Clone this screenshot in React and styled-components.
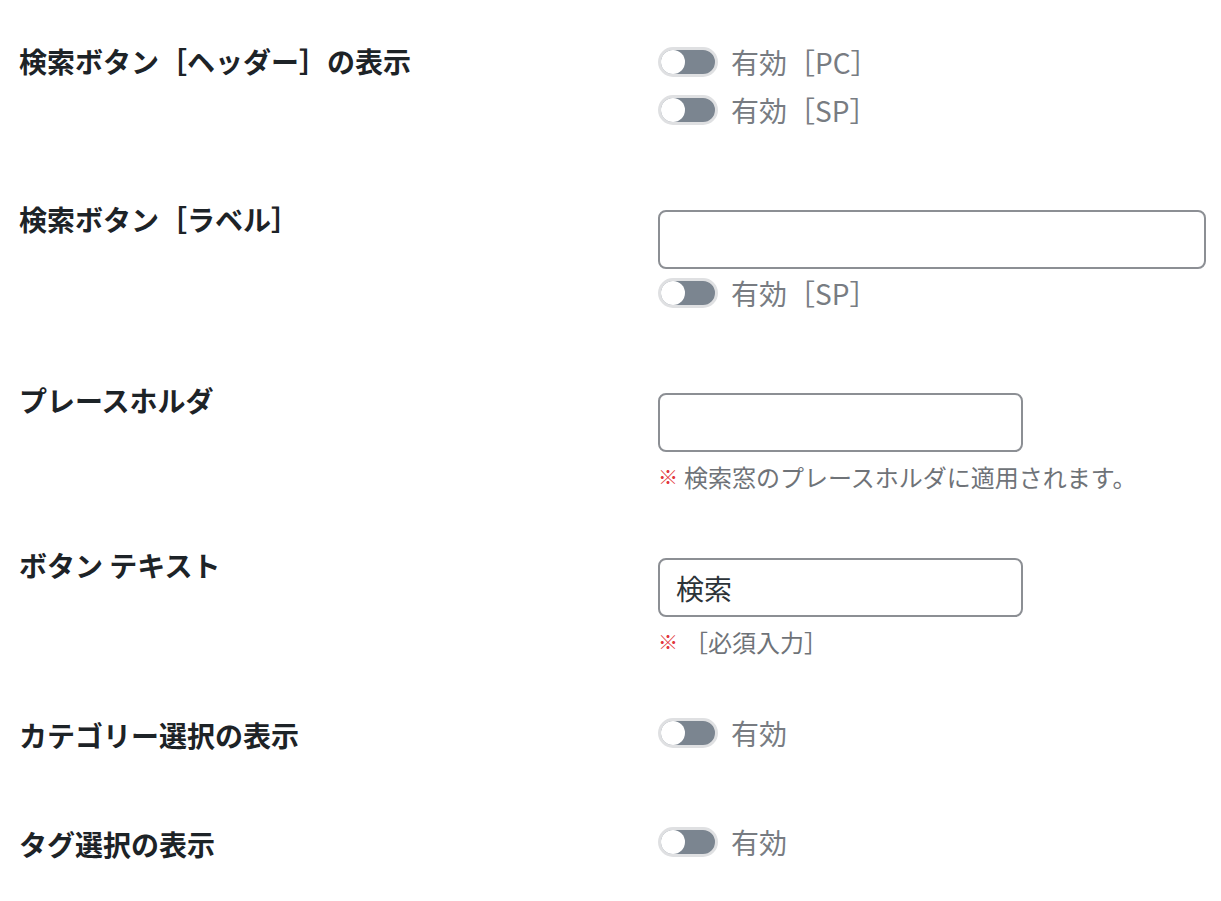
import React from 'react';
import styled, { createGlobalStyle } from 'styled-components';

const GlobalStyle = createGlobalStyle`
  html, body {
    margin: 0;
    padding: 0;
    background: #ffffff;
  }
  body {
    font-family: "Noto Sans CJK JP", "Noto Sans", sans-serif;
    color: #1d2327;
  }
`;

const Form = styled.div`
  display: flex;
  flex-direction: column;
  width: 1221px;
`;

const Row = styled.div`
  display: grid;
  grid-template-columns: 658px 1fr;
  align-items: start;
  margin-top: ${p => p.$mt}px;
`;

const Label = styled.div`
  padding-left: 19px;
  padding-top: ${p => p.$pt || 0}px;
  font-size: 28px;
  font-weight: 700;
  line-height: 46px;
  color: #1d2327;
  white-space: nowrap;
`;

const Field = styled.div`
  display: flex;
  flex-direction: column;
  align-items: flex-start;
  padding-top: ${p => p.$pt || 0}px;
`;

const ToggleLine = styled.label`
  display: flex;
  align-items: center;
  gap: 13px;
  height: 48px;
  font-size: 28px;
  color: #787c82;
  cursor: pointer;
`;

const Track = styled.span`
  position: relative;
  display: inline-block;
  box-sizing: border-box;
  width: 60px;
  height: 30px;
  border-radius: 15px;
  border: 3px solid #dfe0e2;
  background: #7b8590;
  flex-shrink: 0;
`;

const Knob = styled.span`
  position: absolute;
  left: 0;
  top: 0;
  width: 24px;
  height: 24px;
  border-radius: 50%;
  background: #ffffff;
`;

const TextInput = styled.input`
  box-sizing: border-box;
  width: ${p => p.$w}px;
  height: 59px;
  margin: 0;
  padding: 0 16px;
  border: 2px solid #8c8f94;
  border-radius: 8px;
  background: #fff;
  font-family: "Noto Sans CJK JP", "Noto Sans", sans-serif;
  font-size: 28px;
  color: #2c3338;
  outline: none;
`;

const Note = styled.p`
  display: flex;
  align-items: center;
  margin: 6px 0 0;
  height: 36px;
  font-size: 24px;
  color: #6f7378;
  white-space: nowrap;
`;

const Mark = styled.span`
  font-size: 20px;
  color: #e2363b;
  margin-right: 6px;
  font-weight: 700;
`;

const Toggle = ({ children }) => (
  <ToggleLine>
    <Track>
      <Knob />
    </Track>
    <span>{children}</span>
  </ToggleLine>
);

export default function App() {
  return (
    <>
      <GlobalStyle />
      <Form>
        <Row $mt={38}>
          <Label>検索ボタン［ヘッダー］の表示</Label>
          <Field>
            <Toggle>有効［PC］</Toggle>
            <Toggle>有効［SP］</Toggle>
          </Field>
        </Row>

        <Row $mt={62}>
          <Label>検索ボタン［ラベル］</Label>
          <Field $pt={14}>
            <TextInput $w={548} defaultValue="" />
            <Toggle>有効［SP］</Toggle>
          </Field>
        </Row>

        <Row $mt={59}>
          <Label $pt={1}>プレースホルダ</Label>
          <Field $pt={17}>
            <TextInput $w={365} defaultValue="" />
            <Note>
              <Mark>※</Mark>検索窓のプレースホルダに適用されます。
            </Note>
          </Field>
        </Row>

        <Row $mt={47}>
          <Label $pt={1}>ボタン テキスト</Label>
          <Field $pt={17}>
            <TextInput $w={365} defaultValue="検索" />
            <Note>
              <Mark>※</Mark>［必須入力］
            </Note>
          </Field>
        </Row>

        <Row $mt={50}>
          <Label $pt={3}>カテゴリー選択の表示</Label>
          <Field>
            <Toggle>有効</Toggle>
          </Field>
        </Row>

        <Row $mt={60}>
          <Label $pt={3}>タグ選択の表示</Label>
          <Field>
            <Toggle>有効</Toggle>
          </Field>
        </Row>
      </Form>
    </>
  );
}
